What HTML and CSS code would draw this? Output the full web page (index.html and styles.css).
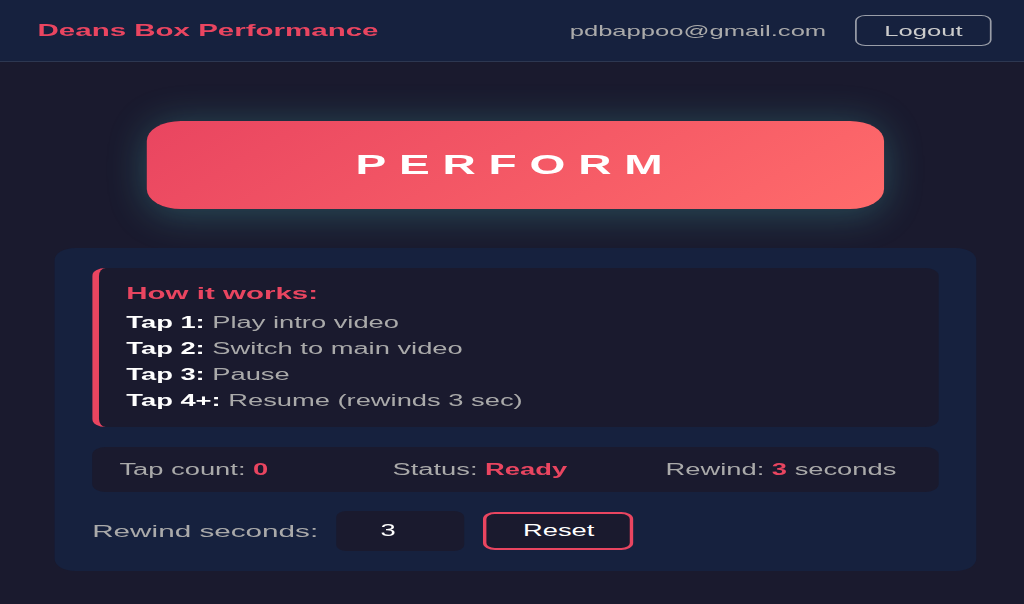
FILE: index.html
```html
<!DOCTYPE html>
<html lang="en">

<head>
    <meta charset="utf-8">
    <meta name="viewport" content="width=device-width, initial-scale=1.0">
    <title>Deans Box Performance</title>

    <link rel="stylesheet" href="styles.css">

</head>

<body>

    <div class="page">
        <header class="topbar">
            <h1 class="brand">Deans Box Performance</h1>
            <div class="user">
                <span class="email">pdbappoo@gmail.com</span>
                <button class="logout">Logout</button>
            </div>
        </header>

        <main class="content">
            <button class="perform">PERFORM</button>

            <section class="panel">
                <div class="howto">
                    <h2>How it works:</h2>
                    <p><strong>Tap 1:</strong> Play intro video</p>
                    <p><strong>Tap 2:</strong> Switch to main video</p>
                    <p><strong>Tap 3:</strong> Pause</p>
                    <p><strong>Tap 4+:</strong> Resume (rewinds 3 sec)</p>
                </div>

                <div class="status">
                    <div>Tap count: <span class="val">0</span></div>
                    <div>Status: <span class="val">Ready</span></div>
                    <div>Rewind: <span class="val">3</span> seconds</div>
                </div>

                <div class="controls">
                    <label for="rewind">Rewind seconds:</label>
                    <input type="number" id="rewind" value="3" min="1" max="30">
                    <button class="reset">Reset</button>
                </div>
            </section>
        </main>
    </div>

</body>

</html>
```

FILE: styles.css
```css
body {
    margin: 0;
    background-color: #1a1a2e;
    font-family: "Liberation Sans", Arial, sans-serif;
    color: #fff;
    overflow: hidden;
}

/* the app is a narrow layout, stretched across the window */
.page {
    width: 600px;
    min-height: 604px;
    transform: scaleX(1.70667);
    transform-origin: 0 0;
}

.topbar {
    height: 61px;
    padding: 0 19px 0 22px;
    display: flex;
    align-items: center;
    justify-content: space-between;
    background-color: #16213e;
    border-bottom: 1px solid rgba(255, 255, 255, .1);
}

.brand {
    margin: 0;
    font-size: 17.3px;
    font-weight: bold;
    color: #e94560;
}

.user {
    display: flex;
    align-items: center;
    gap: 17px;
}

.email {
    font-size: 15px;
    color: #aaa;
}

.logout {
    background: none;
    border: 1px solid #9a9ea8;
    border-radius: 6px;
    color: #ccc;
    font-family: inherit;
    font-size: 15px;
    line-height: 17px;
    padding: 6px 16px;
    cursor: pointer;
}

.content {
    padding: 59px 28px 0 32px;
}

.perform {
    display: block;
    width: 80%;
    height: 88px;
    margin: 0 auto 39px;
    border: none;
    border-radius: 20px;
    background: linear-gradient(135deg, #e94560, #ff6b6b);
    box-shadow: 0 4px 30px rgba(78, 205, 196, .3);
    color: #fff;
    font-family: inherit;
    font-size: 27px;
    font-weight: bold;
    letter-spacing: 7.5px;
    cursor: pointer;
}

.panel {
    background-color: #16213e;
    border-radius: 12px;
    padding: 20px 22px;
}

.howto {
    background-color: #1a1a2e;
    border-left: 4px solid #e94560;
    border-radius: 8px;
    padding: 15px 16px 13px;
}

.howto h2 {
    margin: 0 0 7px;
    font-size: 17.3px;
    line-height: 20px;
    color: #e94560;
}

.howto p {
    margin: 0;
    font-size: 16px;
    line-height: 26px;
    color: #aaa;
}

.howto strong {
    color: #fff;
}

.status {
    margin-top: 20px;
    padding: 12px 16px;
    display: grid;
    grid-template-columns: repeat(3, 1fr);
    gap: 16px;
    background-color: #1a1a2e;
    border-radius: 8px;
    font-size: 16px;
    line-height: 21px;
    color: #aaa;
}

.val {
    color: #e94560;
    font-weight: bold;
}

.controls {
    margin-top: 19px;
    display: flex;
    align-items: center;
    gap: 11px;
}

.controls label {
    font-size: 17.4px;
    color: #aaa;
}

#rewind {
    box-sizing: border-box;
    width: 75px;
    height: 40px;
    padding: 0 8px;
    border: none;
    border-radius: 6px;
    background-color: #1a1a2e;
    color: #fff;
    font-family: inherit;
    font-size: 16px;
    text-align: center;
}

.reset {
    box-sizing: border-box;
    height: 38px;
    padding: 0 21px;
    background-color: #1a1a2e;
    border: 2px solid #e94560;
    border-radius: 7px;
    color: #fff;
    font-family: inherit;
    font-size: 16px;
    cursor: pointer;
}
```
